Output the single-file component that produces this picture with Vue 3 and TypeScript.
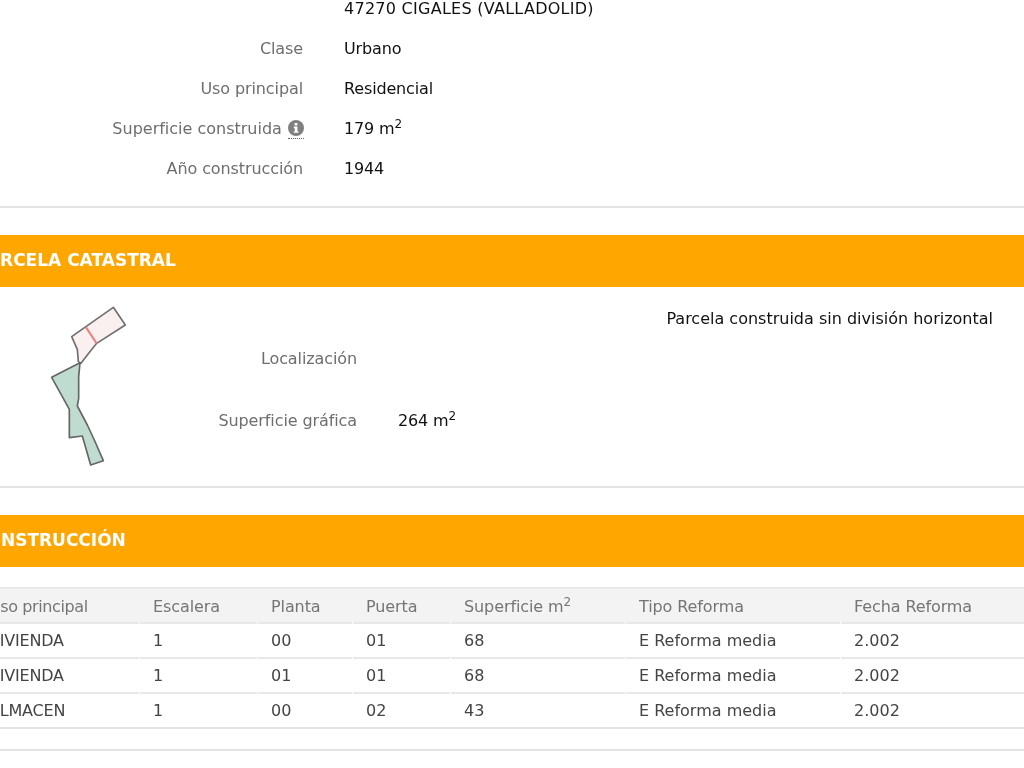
<script setup lang="ts">
interface DataRow { label: string; value: string; sup?: string; info?: boolean; address?: boolean }
const rows: DataRow[] = [
  { label: '', value: '47270 CIGALES (VALLADOLID)', address: true },
  { label: 'Clase', value: 'Urbano' },
  { label: 'Uso principal', value: 'Residencial' },
  { label: 'Superficie construida', value: '179 m', sup: '2', info: true },
  { label: 'Año construcción', value: '1944' },
]
const units = [
  ['VIVIENDA', '1', '00', '01', '68', 'E Reforma media', '2.002'],
  ['VIVIENDA', '1', '01', '01', '68', 'E Reforma media', '2.002'],
  ['ALMACEN', '1', '00', '02', '43', 'E Reforma media', '2.002'],
]
</script>

<template>
  <div class="viewport">
    <main class="page">
      <section class="summary">
        <div v-for="r in rows" :key="r.value" class="row">
          <div class="label" :class="{ 'has-info': r.info }">
            {{ r.label }}
            <abbr v-if="r.info" class="info" title="Información">
              <svg width="16" height="16" viewBox="0 0 16 16">
                <circle cx="8" cy="8" r="8" fill="#808080" />
                <rect x="6.6" y="3" width="2.8" height="2.4" rx="0.6" fill="#fff" />
                <path d="M5.8 6.6h3.6v4.6h1v1.6H5.8v-1.6h1V8.2h-1z" fill="#fff" />
              </svg>
            </abbr>
          </div>
          <div class="value" :class="{ address: r.address }">{{ r.value }}<sup v-if="r.sup">{{ r.sup }}</sup></div>
        </div>
      </section>

      <h2 class="band">PARCELA CATASTRAL</h2>
      <section class="parcel">
        <svg class="plot" width="200" height="190" viewBox="0 0 600 570">
          <path d="M340 52 376 105 290 160 262 195 243 220 235 215 232 178 215 140Z" fill="#fbf0f0" stroke="#707070" stroke-width="5" stroke-linejoin="round" />
          <path d="M258 112 290 160" stroke="#ee8080" stroke-width="6" fill="none" />
          <path d="M240 218 236 260 236 325 232 348 262 405 283 450 310 512 272 525 247 438 208 443 208 358 155 262Z" fill="#c0dcd0" stroke="#666" stroke-width="5" stroke-linejoin="round" />
        </svg>
        <div class="parcel-info">
          <p class="note">Parcela construida sin división horizontal</p>
          <div class="parcel-row loc"><div class="parcel-label">Localización</div></div>
          <div class="parcel-row surf">
            <div class="parcel-label">Superficie gráfica</div>
            <div class="value">264 m<sup>2</sup></div>
          </div>
        </div>
      </section>

      <h2 class="band second">CONSTRUCCIÓN</h2>
      <section class="units">
        <div class="grid head">
          <div class="first">Uso principal</div><div>Escalera</div><div>Planta</div><div>Puerta</div>
          <div><span>Superficie m<sup>2</sup></span></div><div>Tipo Reforma</div><div>Fecha Reforma</div>
        </div>
        <div v-for="(u, i) in units" :key="i" class="grid body">
          <div v-for="(c, j) in u" :key="j" :class="{ first: j === 0 }">{{ c }}</div>
        </div>
      </section>
      <div class="end-rule"></div>
    </main>
  </div>
</template>

<style>
html, body { margin: 0; background: #fff; overflow: hidden; }
</style>

<style scoped>
.viewport { width: 1024px; height: 768px; overflow: hidden; }
.page {
  width: 1070px; margin: -12px 0 0 -24px;
  font: 16px/20px "DejaVu Sans", Verdana, sans-serif; color: #111;
  font-variant-ligatures: none;
  filter: blur(0.4px);
}
.summary { padding-bottom: 18px; border-bottom: 2px solid #e4e4e4; margin-bottom: 27px; }
.row { display: flex; height: 40px; box-sizing: border-box; padding-top: 2px; align-items: center; }
.label { width: 327px; text-align: right; color: #6e6e6e; margin-right: 41px; white-space: nowrap; letter-spacing: -0.1px; }
.label.has-info { letter-spacing: 0; }
.value { letter-spacing: -0.15px; }
.value.address { letter-spacing: 0.27px; }
.info { display: inline-block; position: relative; top: 1px; height: 18px; vertical-align: top; text-decoration: none; margin-left: 1px; margin-right: -1px; border-bottom: 1px dotted #666; line-height: 0; }
sup { font-size: 12px; line-height: 0; }
.band { margin: 0; height: 52px; background: #ffa600; color: #fff; font: bold 17px/50px "DejaVu Sans", Verdana, sans-serif; padding-left: 0; }
.band.second { text-indent: -2px; }
.parcel { display: flex; height: 199px; border-bottom: 2px solid #e4e4e4; margin-bottom: 27px; }
.plot { margin-left: 24px; margin-top: 3px; flex: none; }
.parcel-info { flex: 1; padding-top: 22px; }
.note { margin: 0; padding-right: 53px; text-align: right; color: #111; }
.parcel-row { display: flex; }
.loc { margin-top: 20px; }
.surf { margin-top: 42px; }
.parcel-label { width: 157px; text-align: right; margin-right: 41px; color: #6e6e6e; white-space: nowrap; letter-spacing: -0.1px; }
.units { padding-top: 20px; }
.grid { display: grid; grid-template-columns: 163px 117px 94px 97px 174px 214px 1fr; column-gap: 1px; color: #444; }
.grid > div { padding-left: 13px; box-sizing: border-box; display: flex; align-items: center; white-space: pre; }
.head { background: #f3f3f3; border-top: 2px solid #e8e8e8; color: #757575; height: 33px; }
.head > div { letter-spacing: -0.1px; padding-top: 2px; }
.head > .first { letter-spacing: -0.4px; }
.body > div { height: 35px; border-top: 2px solid #e8e8e8; }
.body > .first { letter-spacing: -0.2px; }
.end-rule { height: 20px; border-top: 2px solid #e4e4e4; border-bottom: 2px solid #e4e4e4; }
</style>
